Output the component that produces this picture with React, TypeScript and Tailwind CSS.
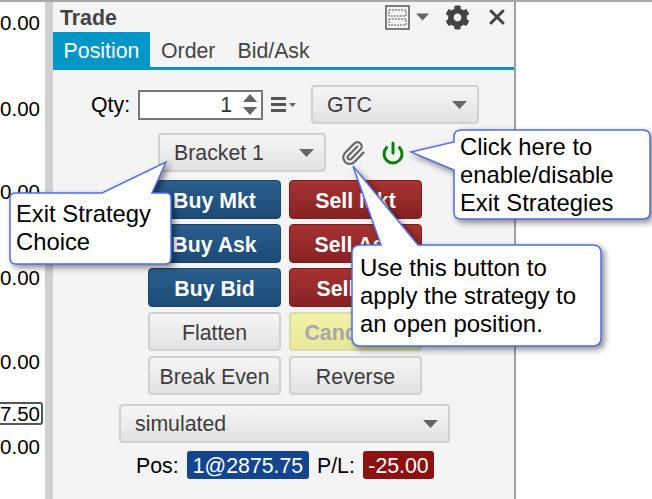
import { FaCog } from "react-icons/fa";
import { Paperclip, Power, X } from "lucide-react";

const prices = [
  { text: "00.00", mt: "mt-[9px]" },
  { text: "60.00", mt: "mt-[63px]" },
  { text: "60.00", mt: "mt-[60px]" },
  { text: "40.00", mt: "mt-[63px]" },
  { text: "20.00", mt: "mt-[61px]" },
];

function Caret({ className = "" }: { className?: string }) {
  return (
    <svg width="15" height="8" viewBox="0 0 15 8" className={className}>
      <path d="M0 0h15L7.5 8z" fill="#666" />
    </svg>
  );
}

function Select({ label, className }: { label: string; className: string }) {
  return (
    <div
      className={`flex h-[39px] items-center justify-between rounded-[4px] border-2 border-[#d0d0d0] bg-gradient-to-b from-[#f6f6f6] to-[#e2e2e2] text-[21.3px] text-[#3c3c3c] ${className}`}
    >
      <span className="pt-[3px]">{label}</span>
      <Caret />
    </div>
  );
}

function Btn({ label, kind }: { label: string; kind: "buy" | "sell" | "plain" | "cancel" }) {
  const styles = {
    buy: "border-[#1a4368] from-[#2b5f8f] to-[#1c4a76] text-white font-bold",
    sell: "border-[#7c1c1c] from-[#a83232] to-[#872222] text-white font-bold",
    plain: "border-2 border-[#d0d0d0] from-[#f6f6f6] to-[#e2e2e2] text-[#3c3c3c]",
    cancel: "border-2 border-[#dcdca8] from-[#f2f2a8] to-[#e8e89a] text-[#a8a8a8] font-bold",
  };
  return (
    <div
      className={`flex h-[39px] items-center justify-center rounded-[4px] border bg-gradient-to-b pt-[4px] text-[21.3px] ${styles[kind]}`}
    >
      {label}
    </div>
  );
}

function Callout({
  className,
  viewBox,
  path,
  children,
}: {
  className: string;
  viewBox: string;
  path: string;
  children: React.ReactNode;
}) {
  return (
    <div className={`absolute ${className}`}>
      <svg
        viewBox={viewBox}
        className="absolute inset-0 h-full w-full overflow-visible drop-shadow-[3px_3px_3px_rgba(0,0,0,0.45)]"
      >
        <path d={path} fill="#fff" stroke="#4f6ef0" strokeWidth="1.5" />
      </svg>
      <div className="relative text-[23.8px] leading-[28px] text-black">{children}</div>
    </div>
  );
}

export default function App() {
  return (
    <div className="relative h-[499px] w-[652px] overflow-hidden bg-white font-['Liberation_Sans',Arial,sans-serif]">
      <div className="flex h-full border-t-2 border-[#a8a8a8]">
        {/* price axis */}
        <div className="flex w-[45px] flex-col items-end pr-[5px] text-[20.5px] leading-[23px] text-black">
          {prices.map((p, i) => (
            <div key={i} className={p.mt}>
              {p.text}
            </div>
          ))}
          <div className="mt-[29px] -mr-[3px] rounded-[3px] border-2 border-[#555] pr-[1px] leading-[19px]">97.50</div>
          <div className="mt-[10px]">00.00</div>
        </div>
        <div className="w-[8px] bg-[#d0d0d0]" />

        {/* trade panel */}
        <div className="flex h-full w-[463px] flex-col border-r-2 border-[#a0a0a0] bg-[#f4f4f4]">
          <div className="flex h-[30px] items-center justify-between pl-[7px] pr-[5px]">
            <span className="pt-[3px] text-[21.3px] font-bold text-[#444]">Trade</span>
            <div className="flex items-center">
              <svg width="25" height="25" viewBox="0 0 25 25">
                <rect x="1" y="1" width="23" height="23" fill="none" stroke="#555" strokeWidth="1.5" />
                <rect x="4" y="5" width="17" height="6" fill="none" stroke="#555" strokeWidth="1" strokeDasharray="2 1" />
                <rect x="4" y="14" width="17" height="6" fill="none" stroke="#555" strokeWidth="1" strokeDasharray="2 1" />
              </svg>
              <Caret className="ml-[6px] mr-[16px] h-[8px] w-[13px]" />
              <FaCog className="mr-[15px] h-[25px] w-[25px] text-[#444]" />
              <X className="h-[24px] w-[24px] text-[#444]" strokeWidth={3} />
            </div>
          </div>

          <div className="flex h-[38px] items-start border-b-[3px] border-[#0097c8] text-[21.3px] leading-[38px] text-[#444]">
            <div className="h-[35px] w-[97px] bg-[#0097c8] text-center text-white">Position</div>
            <div className="ml-[11px]">Order</div>
            <div className="ml-[22px]">Bid/Ask</div>
          </div>

          <div className="mt-[15px] flex h-[39px] items-center pl-[38px]">
            <span className="w-[47px] pt-[2px] text-[21.3px] text-black">Qty:</span>
            <div className="flex h-[30px] w-[125px] items-center justify-end border-2 border-[#777] bg-white pr-[3px]">
              <span className="mr-[10px] pt-[2px] text-[21.3px] text-[#333]">1</span>
              <svg width="16" height="24" viewBox="0 0 16 24">
                <path d="M8 1l7 8H1zM1 14h14l-7 8z" fill="#666" />
              </svg>
            </div>
            <svg width="26" height="16" viewBox="0 0 26 16" className="ml-[8px]">
              <path d="M0 0h15v3H0zM0 6h15v3H0zM0 12h15v3H0z" fill="#555" />
              <path d="M18 6h7l-3.5 4z" fill="#666" />
            </svg>
            <Select label="GTC" className="ml-[14px] w-[168px] pl-[14px] pr-[10px]" />
          </div>

          <div className="mt-[9px] flex h-[39px] items-center pl-[105px]">
            <Select label="Bracket 1" className="w-[168px] pl-[14px] pr-[10px]" />
            <Paperclip className="ml-[14px] h-[26px] w-[26px] text-[#666]" strokeWidth={2} />
            <Power className="ml-[15px] h-[24px] w-[24px] text-[#0a820a]" strokeWidth={3} />
          </div>

          <div className="ml-[95px] mt-[8px] grid w-[274px] grid-cols-[133px_133px] gap-x-[8px] gap-y-[5px]">
            <Btn label="Buy Mkt" kind="buy" />
            <Btn label="Sell Mkt" kind="sell" />
            <Btn label="Buy Ask" kind="buy" />
            <Btn label="Sell Ask" kind="sell" />
            <Btn label="Buy Bid" kind="buy" />
            <Btn label="Sell Bid" kind="sell" />
            <Btn label="Flatten" kind="plain" />
            <Btn label="Cancel All" kind="cancel" />
            <Btn label="Break Even" kind="plain" />
            <Btn label="Reverse" kind="plain" />
          </div>

          <Select label="simulated" className="ml-[66px] mt-[9px] w-[331px] pl-[14px] pr-[10px]" />

          <div className="mt-[8px] flex h-[28px] items-center pl-[83px] text-[21.3px] text-black">
            <span className="w-[41px] pt-[3px]">Pos:</span>
            <span className="ml-[10px] flex h-[28px] w-[122px] items-center justify-center rounded-[3px] bg-[#14468f] pt-[3px] text-white">
              1@2875.75
            </span>
            <span className="ml-[8px] w-[38px] pt-[3px]">P/L:</span>
            <span className="ml-[8px] flex h-[28px] w-[71px] items-center justify-center rounded-[3px] bg-[#8c1212] pt-[3px] text-white">
              -25.00
            </span>
          </div>
        </div>
      </div>

      <Callout
        className="left-[10px] top-[162px] h-[103px] w-[161px]"
        viewBox="0 0 161 103"
        path="M156 0L142 31H156Q161 31 161 36V96Q161 102 155 102H6Q0 102 0 96V36Q0 31 6 31H92Z"
      >
        <div className="pl-[6px] pt-[38px]">
          Exit Strategy
          <br />
          Choice
        </div>
      </Callout>

      <Callout
        className="left-[411px] top-[130px] h-[89px] w-[239px]"
        viewBox="0 0 239 89"
        path="M43 12V7Q43 0 50 0H232Q239 0 239 7V82Q239 89 232 89H50Q43 89 43 82V40L0 22Z"
      >
        <div className="pl-[49px] pt-[3px]">
          Click here to
          <br />
          enable/disable
          <br />
          Exit Strategies
        </div>
      </Callout>

      <Callout
        className="left-[352px] top-[166px] h-[180px] w-[249px]"
        viewBox="0 0 249 180"
        path="M1 0L29 79H8Q0 79 0 87V172Q0 180 8 180H241Q249 180 249 172V87Q249 79 241 79H66Z"
      >
        <div className="pl-[8px] pt-[88px] text-[24px]">
          Use this button to
          <br />
          apply the strategy to
          <br />
          an open position.
        </div>
      </Callout>
    </div>
  );
}
